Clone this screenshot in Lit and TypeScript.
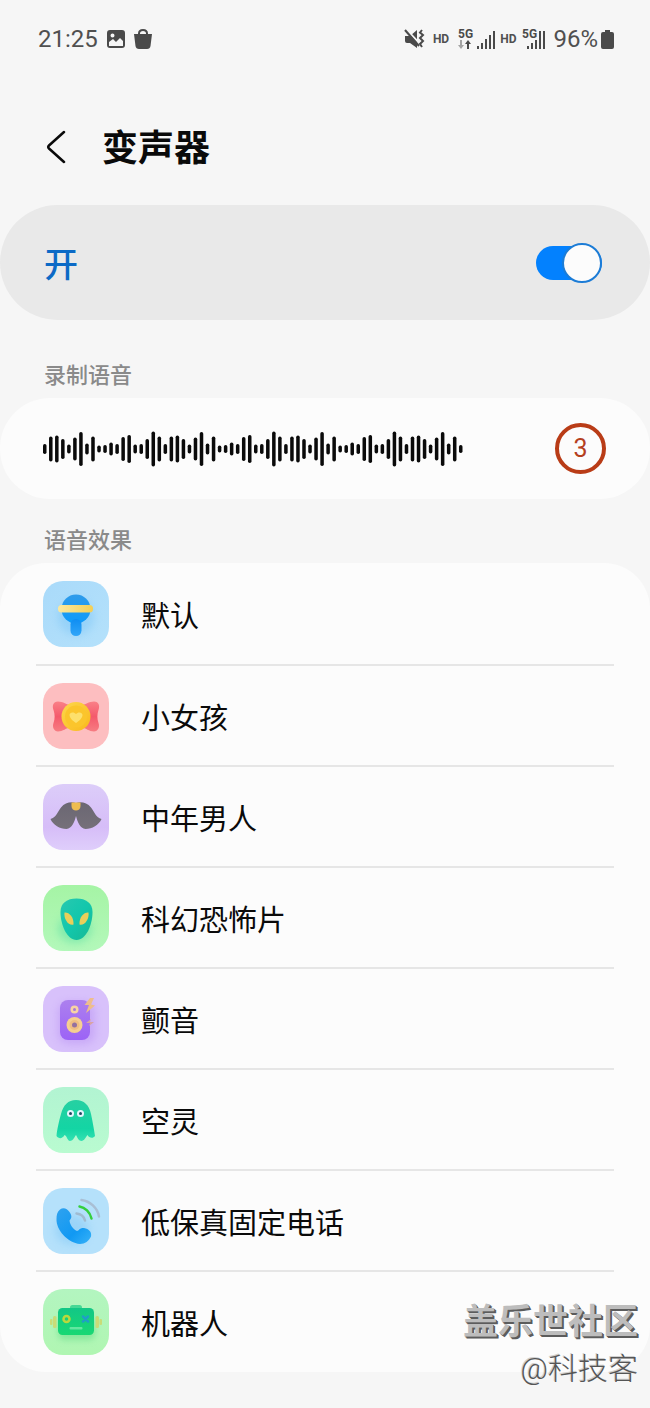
import { LitElement, html, svg, css } from 'lit';
import type { TemplateResult } from 'lit';
import { customElement, property, state } from 'lit/decorators.js';

const WAVE = [10, 25, 27, 20, 9, 23, 34, 11, 25, 7, 8, 13, 10, 24, 28, 9, 10, 20, 35, 25];
const BAR_COUNT = 70;

const icons: Record<string, TemplateResult> = {
    rattle: svg`
        <defs>
            <linearGradient id="bg" x1="0" y1="0" x2="1" y2="1"><stop offset="0" stop-color="#a9dafa"/><stop offset="1" stop-color="#b4e1fb"/></linearGradient>
            <linearGradient id="ball" x1="0" y1="0" x2="0" y2="1"><stop offset="0" stop-color="#2f9bea"/><stop offset="1" stop-color="#0d9bfa"/></linearGradient>
            <linearGradient id="stick" x1="0" y1="0" x2="0" y2="1"><stop offset="0" stop-color="#0f8df2"/><stop offset="1" stop-color="#31a6f8"/></linearGradient>
            <linearGradient id="band" x1="0" y1="0" x2="1" y2="0"><stop offset="0" stop-color="#fbe9a0"/><stop offset="1" stop-color="#f3cf55"/></linearGradient>
            <filter id="glow" x="-50%" y="-50%" width="200%" height="200%"><feGaussianBlur stdDeviation="4"/></filter>
        </defs>
        <rect width="66" height="66" rx="20" fill="url(#bg)"/>
        <ellipse cx="33" cy="36" rx="18" ry="18" fill="#68bcf5" opacity=".35" filter="url(#glow)"/>
        <circle cx="33" cy="28" r="14.500" fill="url(#ball)"/>
        <rect x="27.500" y="38" width="11" height="17" rx="5.500" fill="url(#stick)"/>
        <rect x="15" y="24" width="35" height="7.500" rx="3.500" fill="url(#band)"/>`,
    candy: svg`
        <defs>
            <linearGradient id="wing" x1="0" y1="0" x2="0" y2="1"><stop offset="0" stop-color="#fa8087"/><stop offset=".5" stop-color="#f45a6c"/><stop offset="1" stop-color="#f77c82"/></linearGradient>
            <linearGradient id="coin" x1="0" y1="0" x2="1" y2="1"><stop offset="0" stop-color="#fdd84c"/><stop offset="1" stop-color="#f9b81c"/></linearGradient>
        </defs>
        <rect width="66" height="66" rx="20" fill="#fdbec0"/>
        <path d="M28 22C24 22 20 18.500 15 18.500C10 18.500 9 23 10.500 27C12 31 12 36 10.500 40C9 44 11 48.500 15 48.500C20 48.500 23 45 28 44Z" fill="url(#wing)"/>
        <path d="M38 22C42 22 46 18.500 51 18.500C56 18.500 57 23 55.500 27C54 31 54 36 55.500 40C57 44 55 48.500 51 48.500C46 48.500 43 45 38 44Z" fill="url(#wing)"/>
        <circle cx="33" cy="33.500" r="14.500" fill="url(#coin)"/>
        <circle cx="33" cy="33.500" r="11" fill="#fbc52c"/>
        <path d="M33 40C30 38 26.500 35 26.500 32C26.500 29 31 28.500 33 31C35 28.500 39.500 29 39.500 32C39.500 35 36 38 33 40Z" fill="#fde06c"/>`,
    moustache: svg`
        <defs>
            <linearGradient id="bg" x1="0" y1="0" x2="0" y2="1"><stop offset="0" stop-color="#dccdf9"/><stop offset=".65" stop-color="#d6bdf8"/><stop offset="1" stop-color="#dfcefb"/></linearGradient>
            <linearGradient id="hair" x1="0" y1="0" x2="0" y2="1"><stop offset="0" stop-color="#6b6773"/><stop offset="1" stop-color="#757079"/></linearGradient>
        </defs>
        <rect width="66" height="66" rx="20" fill="url(#bg)"/>
        <path d="M33 19C28 17.500 22 18.500 18 23.500C14.500 28 13 33.500 7.500 35C10 41 17 45 23.500 45C29 44.500 31.500 38 33 32C34.500 38 37 44.500 42.500 45C49 45 56 41 58.500 35C53 33.500 51.500 28 48 23.500C44 18.500 38 17.500 33 19Z" fill="url(#hair)"/>
        <path d="M28.500 18.500H37.500V22C37.500 28 28.500 28 28.500 22Z" fill="#efbd50"/>`,
    alien: svg`
        <defs>
            <linearGradient id="bg" x1="0" y1="0" x2="0" y2="1"><stop offset="0" stop-color="#a5f4a5"/><stop offset="1" stop-color="#b3f8ba"/></linearGradient>
            <linearGradient id="head" x1="0" y1="0" x2="1" y2="1"><stop offset="0" stop-color="#28c8b0"/><stop offset=".5" stop-color="#13c7ac"/><stop offset="1" stop-color="#16b894"/></linearGradient>
            <filter id="glow" x="-50%" y="-50%" width="200%" height="200%"><feGaussianBlur stdDeviation="4"/></filter>
        </defs>
        <rect width="66" height="66" rx="20" fill="url(#bg)"/>
        <ellipse cx="32" cy="44" rx="17" ry="14" fill="#56dfa5" opacity=".5" filter="url(#glow)"/>
        <path d="M33.500 13.500C43 13.500 49.500 18 49.500 27C49.500 40 43 55 33.500 55C24 55 17.500 40 17.500 27C17.500 18 24 13.500 33.500 13.500Z" fill="url(#head)"/>
        <path d="M21.500 27.500C26 27 31 32 30.500 39.500C25.500 41 20.500 34 21.500 27.500Z" fill="#e9cf5a"/>
        <path d="M45.500 27.500C41 27 36 32 36.500 39.500C41.500 41 46.500 34 45.500 27.500Z" fill="#e9cf5a"/>`,
    speaker: svg`
        <defs>
            <linearGradient id="box" x1="0" y1="0" x2="0" y2="1"><stop offset="0" stop-color="#ac80ee"/><stop offset="1" stop-color="#9c63f6"/></linearGradient>
            <filter id="glow" x="-50%" y="-50%" width="200%" height="200%"><feGaussianBlur stdDeviation="4"/></filter>
        </defs>
        <rect width="66" height="66" rx="20" fill="#d8c1fb"/>
        <rect x="15" y="16" width="37" height="42" rx="10" fill="#b48af2" opacity=".45" filter="url(#glow)"/>
        <rect x="17" y="14" width="30" height="40" rx="8" fill="url(#box)"/>
        <circle cx="31.500" cy="23.500" r="4" fill="#f8d3a4"/>
        <circle cx="31.500" cy="23.500" r="1.500" fill="#a679d8"/>
        <circle cx="31.500" cy="39" r="8" fill="#f6cf91"/>
        <circle cx="31.500" cy="39" r="5" fill="#efbd82"/>
        <circle cx="31.500" cy="39" r="2.500" fill="#94719f"/>
        <path d="M47 12L41.500 19H46L43 27L52 19.500L48 18.500L51 12Z" fill="#eebd8c"/>
        <path d="M43 37L48 33L47 36L51 36L46 40L47 37Z" fill="#d9a4a4"/>`,
    ghost: svg`
        <defs>
            <linearGradient id="bg" x1="0" y1="0" x2="0" y2="1"><stop offset="0" stop-color="#b2f4d2"/><stop offset="1" stop-color="#b9fbd0"/></linearGradient>
            <linearGradient id="body" x1="0" y1="0" x2="0" y2="1"><stop offset="0" stop-color="#26d0a2"/><stop offset=".7" stop-color="#13d5a4"/><stop offset="1" stop-color="#34e1b2"/></linearGradient>
        </defs>
        <rect width="66" height="66" rx="20" fill="url(#bg)"/>
        <path d="M33 13C41 13 46 18 48 27C50 36 51 43 52 49C50 52 46 51 44.500 48C43 50 41 54 38.500 54C36 54 34.500 51 33 48C31 51 29.500 54 27 54C24.500 54 24 49 21.500 48C19.500 52 15.500 52 13.500 49C14 43 16 34 18 27C20.500 18 25 13 33 13Z" fill="url(#body)"/>
        <circle cx="27.500" cy="26.500" r="3.500" fill="#e3f5fc"/>
        <circle cx="37.500" cy="26.500" r="3.500" fill="#e3f5fc"/>
        <circle cx="27.500" cy="26.500" r="1.500" fill="#214a62"/>
        <circle cx="37.500" cy="26.500" r="1.500" fill="#214a62"/>`,
    phone: svg`
        <defs>
            <linearGradient id="handset" x1="0" y1="0" x2="1" y2="1"><stop offset="0" stop-color="#2fa2ef"/><stop offset=".6" stop-color="#1199f3"/><stop offset="1" stop-color="#37b2f8"/></linearGradient>
            <filter id="glow" x="-50%" y="-50%" width="200%" height="200%"><feGaussianBlur stdDeviation="4"/></filter>
        </defs>
        <rect width="66" height="66" rx="20" fill="#b5e1fb"/>
        <ellipse cx="29" cy="42" rx="17" ry="15" fill="#73c1f4" opacity=".4" filter="url(#glow)"/>
        <path d="M17 21.500C20 19 24 20 26.500 24C29 27.500 29 30 26.500 32.500C27 37 30 41 34 43C36 42.500 37 39.500 41 40C46 41 49 44 48 48.500C46 53 42 56 37 56C25 55 13 42 13.500 31C13.500 27 14 24 17 21.500Z" fill="url(#handset)"/>
        <g fill="none" stroke-linecap="round" stroke-width="2.500">
            <path d="M38.500 12C47 13 54.500 20 56 28.500" stroke="#a9bfd4"/>
            <path d="M36.500 18.500C42 19.500 47 24 48.500 30.500" stroke="#35cf3d"/>
            <path d="M33.500 25.500C38 26 41 28.500 42 32.500" stroke="#a0bbd0"/>
        </g>`,
    robot: svg`
        <defs>
            <linearGradient id="bg" x1="0" y1="0" x2="0" y2="1"><stop offset="0" stop-color="#b3f5c0"/><stop offset="1" stop-color="#b0f6b2"/></linearGradient>
            <linearGradient id="face" x1="0" y1="0" x2="0" y2="1"><stop offset="0" stop-color="#12c786"/><stop offset="1" stop-color="#19d873"/></linearGradient>
            <filter id="glow" x="-50%" y="-50%" width="200%" height="200%"><feGaussianBlur stdDeviation="3"/></filter>
        </defs>
        <rect width="66" height="66" rx="20" fill="url(#bg)"/>
        <rect x="15" y="28" width="37" height="23" rx="6" fill="#63dd86" opacity=".55" filter="url(#glow)"/>
        <g fill="#c9dc78">
            <rect x="10" y="27" width="3.500" height="12" rx="1.500"/>
            <rect x="7" y="30" width="2.500" height="6" rx="1"/>
            <rect x="52.500" y="27" width="3.500" height="12" rx="1.500"/>
            <rect x="56.500" y="30" width="2.500" height="6" rx="1"/>
        </g>
        <rect x="27" y="16" width="12" height="6" rx="2.500" fill="#46d896"/>
        <rect x="15" y="19" width="36" height="27" rx="4.500" fill="url(#face)"/>
        <circle cx="23.500" cy="30" r="3" fill="none" stroke="#b9d83c" stroke-width="2.500"/>
        <path d="M40 27.500L45 32.500M45 27.500L40 32.500" stroke="#1f9fc6" stroke-width="2.500" stroke-linecap="round"/>
        <rect x="26.500" y="38" width="13" height="2.500" rx="1" fill="#63e6a0"/>`,
};

const effects = [
    { icon: 'rattle', label: '默认' },
    { icon: 'candy', label: '小女孩' },
    { icon: 'moustache', label: '中年男人' },
    { icon: 'alien', label: '科幻恐怖片' },
    { icon: 'speaker', label: '颤音' },
    { icon: 'ghost', label: '空灵' },
    { icon: 'phone', label: '低保真固定电话' },
    { icon: 'robot', label: '机器人' },
];

// one element per icon keeps the gradient ids apart
@customElement('effect-icon')
export class EffectIcon extends LitElement {
    static styles = css`
        :host {
            display: block;
            flex: none;
            width: 66px;
            height: 66px;
        }

        svg {
            display: block;
        }
    `;

    @property() name = '';

    render() {
        return html`<svg width="66" height="66" viewBox="0 0 66 66" aria-hidden="true">${icons[this.name]}</svg>`;
    }
}

@customElement('status-bar')
export class StatusBar extends LitElement {
    static styles = css`
        :host {
            display: flex;
            justify-content: space-between;
            align-items: center;
            height: 78px;
            padding: 0 36px 0 38px;
            font-family: Roboto, sans-serif;
            font-size: 24px;
            color: #505050;
        }

        .group {
            display: flex;
            align-items: center;
        }

        .left {
            gap: 9px;
        }

        .right {
            gap: 8px;
        }

        .sim {
            display: flex;
            align-items: center;
            gap: 5px;
        }

        .tiny {
            font-size: 12px;
            line-height: 12px;
            font-weight: 700;
        }

        .power {
            display: flex;
            align-items: center;
            gap: 3px;
        }

        svg {
            display: block;
        }

        svg text {
            font-size: 12px;
            font-weight: 700;
        }
    `;

    render() {
        return html`
            <div class="group left">
                <span>21:25</span>
                <svg width="18" height="18" viewBox="0 0 18 18" fill="#4a4a4a">
                    <path fill-rule="evenodd" d="M3 0H15Q18 0 18 3V15Q18 18 15 18H3Q0 18 0 15V3Q0 0 3 0ZM2 12V16H16V11L13 8L9 12L6 9ZM5.500 3.500A2 2 0 1 0 5.500 7.500A2 2 0 1 0 5.500 3.500Z"/>
                </svg>
                <svg width="18" height="20" viewBox="0 0 18 20">
                    <path d="M5 6V4.500Q5 1 9 1T13 4.500V6" fill="none" stroke="#4a4a4a" stroke-width="2"/>
                    <path d="M0 5H18L16.500 17Q16 20 13 20H5Q2 20 1.500 17Z" fill="#4a4a4a"/>
                </svg>
            </div>
            <div class="group right">
                <svg width="21" height="20" viewBox="0 0 21 20">
                    <path d="M1 7H6L13 1V19L6 14H3Q1 14 1 12Z" fill="#4a4a4a"/>
                    <path d="M2 0L16 15" stroke="#f6f6f6" stroke-width="2"/>
                    <path d="M1 1L15 17" stroke="#4a4a4a" stroke-width="2"/>
                    <path d="M18 1L16 3.500L19 6L16 9L19 12L16 15L18 18" fill="none" stroke="#4a4a4a" stroke-width="2"/>
                </svg>
                <span class="tiny">HD</span>
                <div class="sim">
                    <svg width="38" height="22" viewBox="0 0 38 22" fill="#4a4a4a">
                        <text x="1" y="10">5G</text>
                        <path d="M3 12H5V17H7L4 21L1 17H3Z" fill="#a5a5a5"/>
                        <path d="M10 21H12V16H14L11 12L8 16H10Z"/>
                        <path d="M20 18H22V21H20ZM24 15H26V21H24ZM28 11H30V21H28ZM32 7H34V21H32ZM36 3H38V21H36Z"/>
                    </svg>
                    <span class="tiny">HD</span>
                    <svg width="24" height="22" viewBox="0 0 24 22" fill="#4a4a4a">
                        <text x="1" y="10">5G</text>
                        <path d="M6 18H8V21H6ZM10 15H12V21H10ZM14 12H16V21H14ZM18 3H20V21H18ZM22 3H24V21H22Z"/>
                    </svg>
                </div>
                <div class="power">
                    <span>96%</span>
                    <svg width="13" height="19" viewBox="0 0 13 19">
                        <path d="M4 0H9V2H11Q13 2 13 4V17Q13 19 11 19H2Q0 19 0 17V4Q0 2 2 2H4Z" fill="#4a4a4a"/>
                    </svg>
                </div>
            </div>
        `;
    }
}

@customElement('app-root')
export class AppRoot extends LitElement {
    static styles = css`
        :host {
            display: block;
            position: relative;
            box-sizing: border-box;
            min-height: 100vh;
            padding-bottom: 36px;
            background-color: #f6f6f6;
            color: #0a0a0a;
            font-family: Roboto, 'Noto Sans CJK SC', sans-serif;
        }

        button {
            border: 0;
            padding: 0;
            margin: 0;
            background: none;
            color: inherit;
            font: inherit;
            text-align: left;
        }

        svg {
            display: block;
        }

        header {
            display: flex;
            align-items: flex-end;
            gap: 36px;
            padding: 49px 46px 38px;
        }

        h1 {
            margin: 0;
            font-size: 36px;
            line-height: 36px;
            font-weight: 700;
        }

        .switch {
            display: flex;
            justify-content: space-between;
            align-items: center;
            height: 115px;
            padding: 0 48px 0 44px;
            border-radius: 58px;
            background-color: #e9e9e9;
            color: #0c6ac6;
            font-size: 34px;
            font-weight: 500;
        }

        .switch input {
            appearance: none;
            display: flex;
            align-items: center;
            width: 66px;
            height: 34px;
            margin: 0;
            border-radius: 17px;
            background-color: #9a9a9a;
        }

        .switch input::before {
            content: '';
            box-sizing: border-box;
            width: 40px;
            height: 40px;
            flex: none;
            border: 2px solid #9a9a9a;
            border-radius: 50%;
            background-color: #fcfcfc;
        }

        .switch input:checked {
            justify-content: flex-end;
            background-color: #0381fe;
        }

        .switch input:checked::before {
            border-color: #1c7cd6;
        }

        h2 {
            margin: 0;
            padding: 0 44px;
            font-size: 22px;
            line-height: 32px;
            font-weight: 500;
            color: #8a8a8a;
        }

        .record-title {
            padding-top: 40px;
            padding-bottom: 6px;
        }

        .effects-title {
            padding-top: 26px;
            padding-bottom: 6px;
        }

        .record {
            display: flex;
            justify-content: space-between;
            align-items: center;
            height: 101px;
            padding: 0 44px 0 43px;
            border-radius: 50px;
            background-color: #fcfcfc;
        }

        .count {
            display: flex;
            justify-content: center;
            align-items: center;
            box-sizing: border-box;
            width: 51px;
            height: 51px;
            border: 4px solid #b93c17;
            border-radius: 50%;
            color: #b5401f;
            font-family: Roboto, sans-serif;
            font-size: 25px;
        }

        .effects {
            margin: 0;
            padding: 0 36px 1px;
            list-style: none;
            border-radius: 46px;
            background-color: #fcfcfc;
        }

        .effects li + li {
            border-top: 2px solid #e6e6e6;
        }

        .effect {
            display: flex;
            align-items: center;
            gap: 32px;
            width: 100%;
            height: 99px;
            padding: 0 7px;
            font-size: 29px;
        }

        .effects li:first-child .effect {
            height: 101px;
        }

        .watermark {
            position: absolute;
            right: 12px;
            bottom: 18px;
            text-align: right;
            pointer-events: none;
        }

        .community {
            font-size: 35px;
            line-height: 50px;
            font-weight: 700;
            color: #bdbdbd;
            text-shadow: 1px 1px #5c5c5c, 2px 2px #5c5c5c;
        }

        .author {
            font-size: 30px;
            line-height: 42px;
            font-weight: 300;
            color: #555;
            text-shadow: -1px -1px #d0d0d0;
        }
    `;

    @state() private enabled = true;

    private toggle(e: Event) {
        this.enabled = (e.target as HTMLInputElement).checked;
    }

    private renderWave() {
        const bars = Array.from({ length: BAR_COUNT }, (_, i) => i === BAR_COUNT - 1 ? 8 : WAVE[i % WAVE.length]);
        return html`
            <svg width="420" height="36" viewBox="0 0 418 36" preserveAspectRatio="none" aria-hidden="true">
                ${bars.map((h, i) => svg`<rect x=${i * 6} y=${18 - h / 2} width="3.500" height=${h} rx="1.700" fill="#0a0a0a"/>`)}
            </svg>
        `;
    }

    render() {
        return html`
            <status-bar></status-bar>
            <header>
                <button aria-label="返回">
                    <svg width="20" height="40" viewBox="0 0 20 40">
                        <path d="M18 5L3 18.500Q1.500 20 3 21.500L18 35" fill="none" stroke="#0a0a0a" stroke-width="2.500" stroke-linecap="round"/>
                    </svg>
                </button>
                <h1>变声器</h1>
            </header>
            <label class="switch">
                <span>开</span>
                <input type="checkbox" role="switch" .checked=${this.enabled} @change=${this.toggle}>
            </label>
            <h2 class="record-title">录制语音</h2>
            <section class="record">
                ${this.renderWave()}
                <button class="count">3</button>
            </section>
            <h2 class="effects-title">语音效果</h2>
            <ul class="effects">
                ${effects.map(effect => html`
                    <li>
                        <button class="effect">
                            <effect-icon name=${effect.icon}></effect-icon>
                            <span>${effect.label}</span>
                        </button>
                    </li>
                `)}
            </ul>
            <div class="watermark">
                <div class="community">盖乐世社区</div>
                <div class="author">@科技客</div>
            </div>
        `;
    }
}
